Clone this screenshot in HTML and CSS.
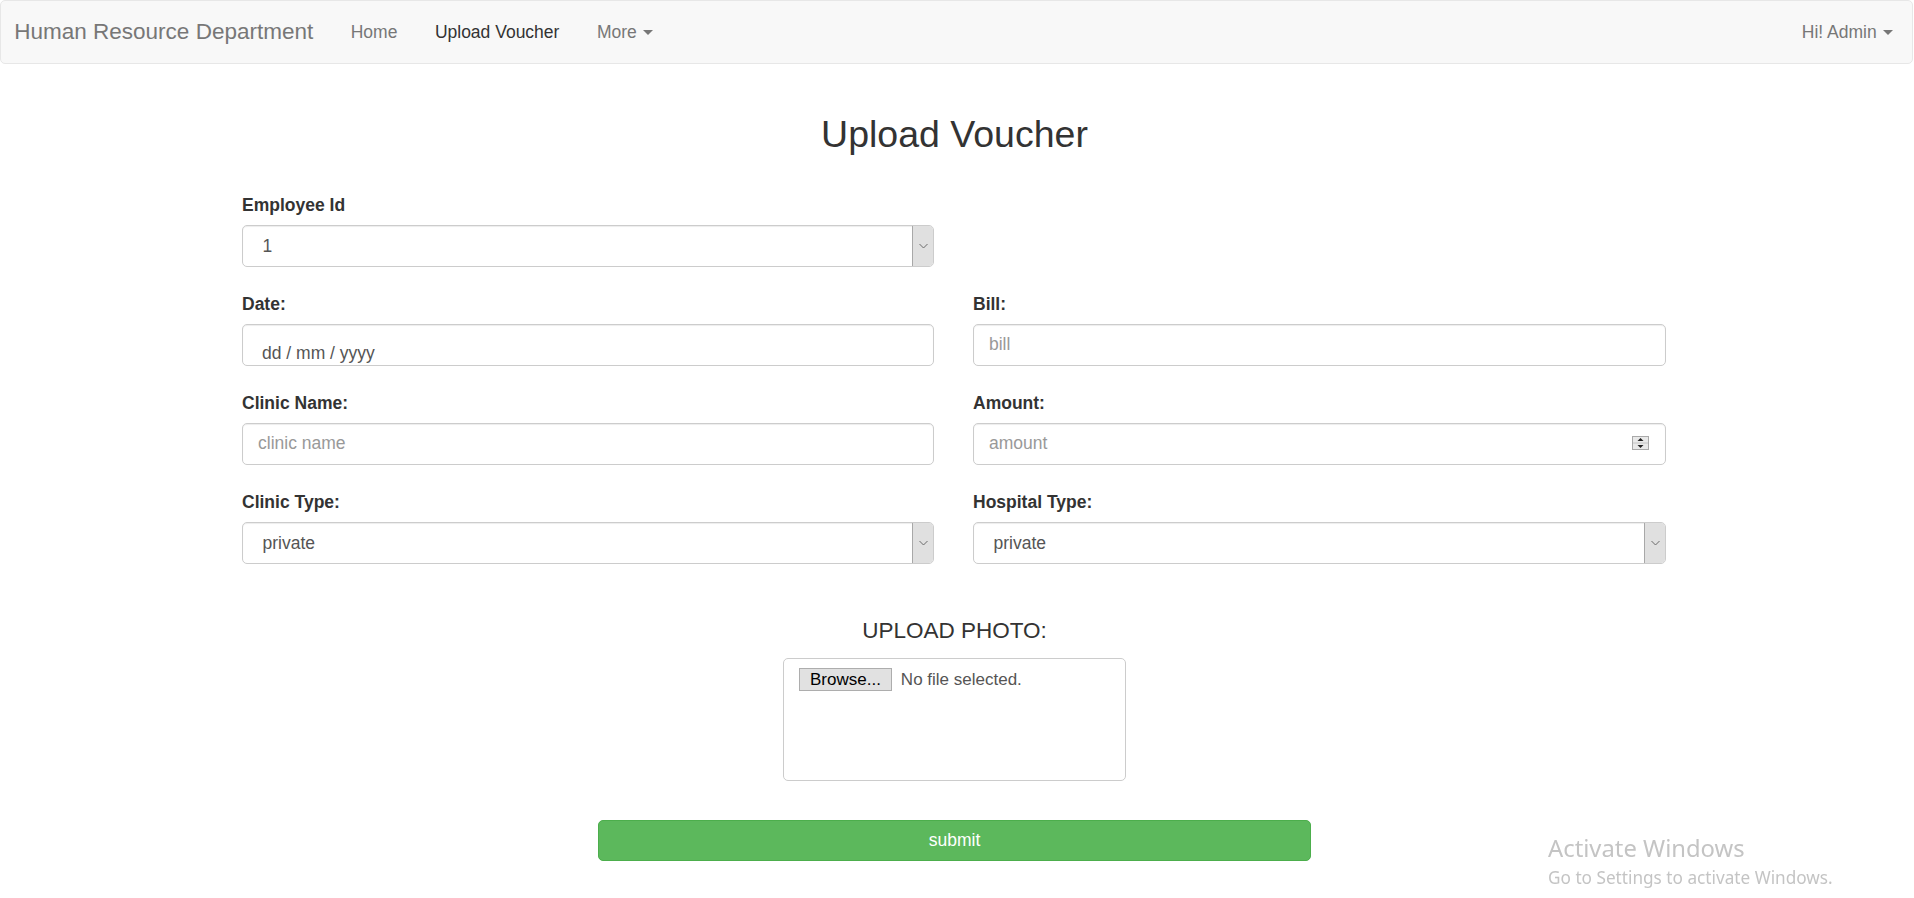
FILE: index.html
```html
<!DOCTYPE html>
<html lang="en">
<head>
<meta charset="utf-8">
<title>Upload Voucher</title>
<link rel="stylesheet" href="styles.css">
</head>
<body>
<nav class="navbar">
  <a class="brand" href="#">Human Resource Department</a>
  <ul class="nav">
    <li><a href="#">Home</a></li>
    <li class="active"><a href="#">Upload Voucher</a></li>
    <li><a href="#">More <span class="caret"></span></a></li>
  </ul>
  <ul class="nav nav-right">
    <li><a href="#">Hi! Admin <span class="caret"></span></a></li>
  </ul>
</nav>

<div class="page">
  <div class="container">
    <h2 class="title">Upload Voucher</h2>
    <form class="form">
      <div class="form-row">
        <div class="group">
          <label>Employee Id</label>
          <div class="select-wrap">
            <select class="select-native"><option>1</option></select>
            <span class="select-btn"><svg width="9" height="6" viewBox="0 0 9 6"><polyline points="0.5,1 4.5,5 8.5,1" fill="none" stroke="#6a6a6a" stroke-width="1"/></svg></span>
          </div>
        </div>
      </div>
      <div class="form-row">
        <div class="group">
          <label>Date:</label>
          <input class="control date" type="text" value="dd / mm / yyyy" readonly>
        </div>
        <div class="group">
          <label>Bill:</label>
          <input class="control" type="text" placeholder="bill">
        </div>
      </div>
      <div class="form-row">
        <div class="group">
          <label>Clinic Name:</label>
          <input class="control" type="text" placeholder="clinic name">
        </div>
        <div class="group">
          <label>Amount:</label>
          <div class="number-wrap">
            <input class="number-native" type="text" placeholder="amount">
            <span class="spinner"><svg width="17" height="14" viewBox="0 0 17 14"><rect x="0.5" y="0.5" width="16" height="13" fill="#e9e9e9" stroke="#a9a9a9"/><line x1="1" y1="7" x2="16" y2="7" stroke="#c4c4c4"/><polygon points="5.5,5 11.5,5 8.5,2" fill="#222"/><polygon points="5.5,9 11.5,9 8.5,12" fill="#222"/></svg></span>
          </div>
        </div>
      </div>
      <div class="form-row">
        <div class="group">
          <label>Clinic Type:</label>
          <div class="select-wrap">
            <select class="select-native"><option>private</option></select>
            <span class="select-btn"><svg width="9" height="6" viewBox="0 0 9 6"><polyline points="0.5,1 4.5,5 8.5,1" fill="none" stroke="#6a6a6a" stroke-width="1"/></svg></span>
          </div>
        </div>
        <div class="group">
          <label>Hospital Type:</label>
          <div class="select-wrap">
            <select class="select-native"><option>private</option></select>
            <span class="select-btn"><svg width="9" height="6" viewBox="0 0 9 6"><polyline points="0.5,1 4.5,5 8.5,1" fill="none" stroke="#6a6a6a" stroke-width="1"/></svg></span>
          </div>
        </div>
      </div>

      <div class="upload">
        <div class="upload-label">UPLOAD PHOTO:</div>
        <div class="upload-box">
          <button type="button" class="browse">Browse...</button>
          <span class="no-file">No file selected.</span>
        </div>
      </div>

      <button type="button" class="submit">submit</button>
    </form>
  </div>
</div>

<div class="watermark">
  <div class="wm-title">Activate Windows</div>
  <div class="wm-sub">Go to Settings to activate Windows.</div>
</div>
</body>
</html>
```

FILE: styles.css
```css
html, body {
  margin: 0;
  padding: 0;
  background: #fff;
}

body {
  font-family: "Liberation Sans", Arial, Helvetica, sans-serif;
  font-size: 17.5px;
  line-height: 25px;
  color: #333;
}

a {
  text-decoration: none;
}

/* Navbar */
.navbar {
  display: flex;
  align-items: center;
  height: 62px;
  background: #f8f8f8;
  border: 1px solid #e7e7e7;
  border-radius: 5px;
  margin-right: 1px;
}

.brand {
  font-size: 22.5px;
  line-height: 62px;
  color: #777;
  padding: 0 18.75px 0 13.3px;
}

.nav {
  list-style: none;
  margin: 0;
  padding: 0;
  display: flex;
}

.nav a {
  display: block;
  padding: 0 18.75px;
  line-height: 62px;
  color: #777;
}

.nav .active a {
  color: #333;
}

.nav-right {
  margin-left: auto;
}

.nav-right a {
  padding-right: 19.5px;
}

.caret {
  display: inline-block;
  width: 0;
  height: 0;
  vertical-align: middle;
  border-top: 5px solid #777;
  border-left: 5px solid transparent;
  border-right: 5px solid transparent;
  margin-top: -2px;
  margin-left: 1px;
}

/* Page */
.page {
  padding-right: 5px;
}

.container {
  width: 1425px;
  margin: 0 auto;
  padding-top: 50px;
}

.title {
  text-align: center;
  font-size: 37.5px;
  font-weight: 400;
  line-height: 41.25px;
  margin: 0 0 37.5px;
  color: #333;
}

.form-row {
  display: grid;
  grid-template-columns: 692px 693px;
  column-gap: 39px;
}

.group {
  margin-bottom: 25px;
}

.group label {
  display: block;
  font-weight: 700;
  line-height: 25px;
  margin-bottom: 7px;
  color: #333;
}

.control,
.select-wrap,
.number-wrap {
  box-sizing: border-box;
  display: block;
  width: 100%;
  height: 42px;
  border: 1px solid #ccc;
  border-radius: 5px;
  box-shadow: inset 0 1px 1px rgba(0, 0, 0, 0.075);
  background: #fff;
  font-family: inherit;
  font-size: 17.5px;
  color: #555;
}

.control {
  padding: 0 15px;
  outline: none;
}

.control::placeholder,
.number-native::placeholder {
  color: #999;
}

.control.date {
  padding: 17px 19px 0;
  color: #555;
}

.select-wrap {
  display: flex;
  overflow: hidden;
}

.select-native {
  flex: 1;
  appearance: none;
  -webkit-appearance: none;
  border: none;
  background: transparent;
  font-family: inherit;
  font-size: 17.5px;
  color: #555;
  padding: 0 0 0 19.5px;
  outline: none;
}

.select-btn {
  width: 20px;
  flex: none;
  background: #e0e0e0;
  border-left: 1px solid #a8a8a8;
  display: flex;
  align-items: center;
  justify-content: center;
}

.number-wrap {
  display: flex;
  align-items: center;
  padding: 0 16px 0 15px;
}

.number-native {
  flex: 1;
  border: none;
  background: transparent;
  font-family: inherit;
  font-size: 17.5px;
  color: #555;
  padding: 0;
  outline: none;
}

.spinner {
  display: flex;
  margin-top: -2px;
}

/* Upload */
.upload {
  padding-top: 30px;
  display: flex;
  flex-direction: column;
  align-items: center;
}

.upload-label {
  font-size: 22.5px;
  line-height: 24.75px;
  color: #333;
  margin-bottom: 14.5px;
}

.upload-box {
  box-sizing: border-box;
  width: 343px;
  height: 123px;
  border: 1px solid #ccc;
  border-radius: 5px;
  padding: 9px 15px;
  display: flex;
  align-items: flex-start;
}

.browse {
  height: 23px;
  padding: 0 10px;
  background: #e1e1e1;
  border: 1px solid #adadad;
  border-radius: 0;
  font-family: "Liberation Sans", Arial, sans-serif;
  font-size: 17px;
  line-height: 21px;
  color: #000;
}

.no-file {
  margin-left: 9px;
  font-size: 17px;
  line-height: 23px;
  color: #555;
}

.submit {
  display: block;
  box-sizing: border-box;
  width: 712.5px;
  height: 41px;
  margin: 39px auto 0;
  background: #5cb85c;
  border: 1px solid #4cae4c;
  border-radius: 5px;
  color: #fff;
  font-family: inherit;
  font-size: 17.5px;
}

/* Windows watermark overlay */
.watermark {
  position: fixed;
  left: 1548px;
  top: 832px;
  font-family: "Noto Sans", "Open Sans", sans-serif;
  color: #c4c4c4;
}

.wm-title {
  font-size: 23.8px;
  line-height: 32px;
}

.wm-sub {
  font-size: 17.2px;
  line-height: 24px;
  margin-top: 2px;
}
```
